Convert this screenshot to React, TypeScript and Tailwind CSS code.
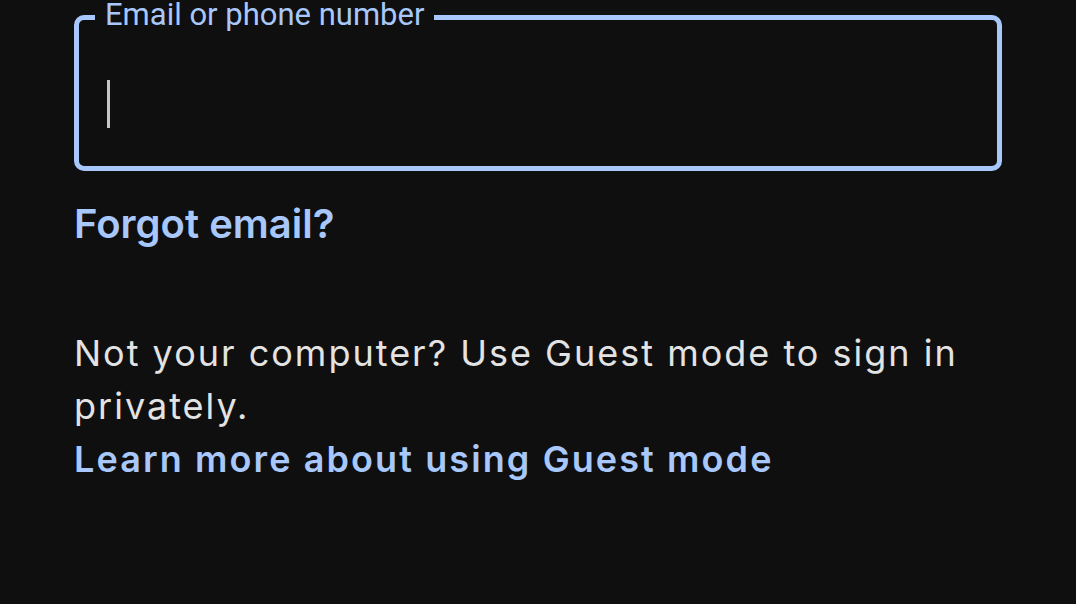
import React from 'react';

const SANS = { fontFamily: 'Inter, Roboto, Arial, sans-serif' };
const LABEL = { fontFamily: 'Roboto, Arial, sans-serif' };

function EmailField() {
  return (
    <div className="relative h-[156px] w-[928px] rounded-[10px] border-[5px] border-[#a8c7fa]">
      <span
        className="absolute -top-[19px] left-[16px] bg-[#0f0f0f] px-[10px] text-[31px] leading-[28px] text-[#a8c7fa]"
        style={LABEL}
      >
        Email or phone number
      </span>
      <div className="ml-[28px] mt-[60px] h-[48px] w-[3px] bg-[#c4c7c5]" />
    </div>
  );
}

export default function App() {
  return (
    <div className="h-[604px] w-[1076px] overflow-hidden bg-[#0f0f0f] pl-[74px] pt-[15px]" style={SANS}>
      <EmailField />
      <a className="mt-[29px] block text-[40px] font-semibold leading-[48px] text-[#a8c7fa]" href="#">
        Forgot email?
      </a>
      <p className="mt-[79px] w-[920px] text-[36px] leading-[53px] tracking-[2px] text-[#e3e3e3]">
        Not your computer? Use Guest mode to sign in privately.
      </p>
      <a className="block text-[36px] font-semibold leading-[53px] tracking-[2.1px] text-[#a8c7fa]" href="#">
        Learn more about using Guest mode
      </a>
    </div>
  );
}
